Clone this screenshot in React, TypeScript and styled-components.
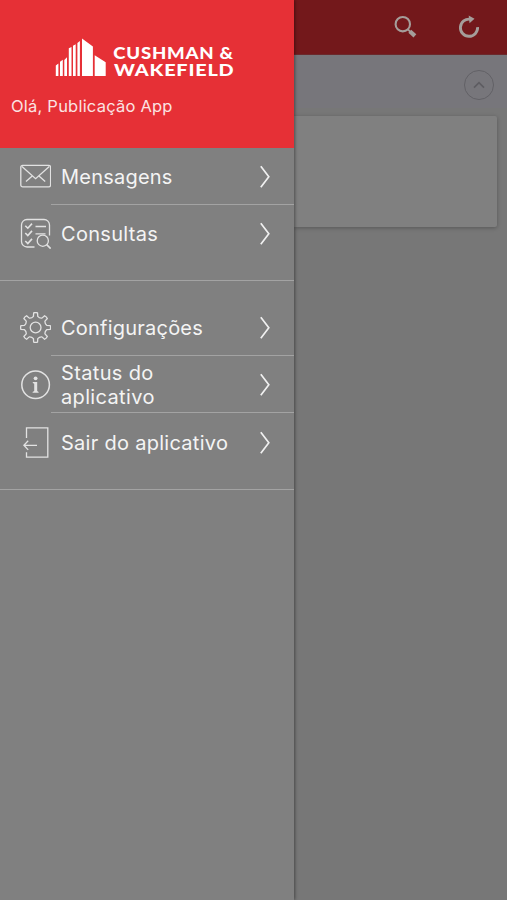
import React from "react";
import styled, { createGlobalStyle } from "styled-components";

const GlobalStyle = createGlobalStyle`
  * { box-sizing: border-box; }
  body { margin: 0; background: #777; font-family: Inter, "Liberation Sans", sans-serif; }
`;

const Screen = styled.div`
  display: flex;
  width: 507px;
  height: 900px;
  overflow: hidden;
  background: #777777;
`;

const Drawer = styled.aside`
  position: relative;
  z-index: 1;
  flex: 0 0 294px;
  background: #808080;
  box-shadow: 1px 0 3px rgba(0, 0, 0, 0.4);
`;

const Header = styled.header`
  height: 147.5px;
  padding: 37px 0 0 11px;
  background: #e63036;
`;

const Logo = styled.svg`
  display: block;
  width: 184px;
  height: 42px;
  margin-left: 42px;
`;

const Greeting = styled.div`
  margin-top: 17px;
  font-size: 16.5px;
  line-height: 20px;
  letter-spacing: 0.22px;
  color: #fbe3e3;
  white-space: nowrap;
`;

const Group = styled.ul<{ $top: number; $bottom: number }>`
  list-style: none;
  margin: 0;
  padding: ${(p) => p.$top}px 0 ${(p) => p.$bottom}px;
  border-bottom: 1px solid #a3a3a3;
`;

const Row = styled.li<{ $height: number }>`
  display: flex;
  height: ${(p) => p.$height}px;
  padding-left: 20px;
`;

const IconSlot = styled.span`
  display: flex;
  align-items: center;
  width: 31px;
  padding-top: 1px;
  color: #e2e2e2;
`;

const RowBody = styled.div<{ $divider?: boolean }>`
  display: flex;
  align-items: center;
  flex: 1;
  padding: 2px 23px 0 10px;
  border-bottom: 1px solid ${(p) => (p.$divider ? "#a3a3a3" : "transparent")};
`;

const Label = styled.span<{ $spacing: number }>`
  flex: 1;
  font-size: 20px;
  line-height: 24px;
  letter-spacing: ${(p) => p.$spacing}px;
  color: #f4f4f4;
  white-space: pre-line;
`;

const Page = styled.main`
  flex: 1;
  background: #777777;
`;

const TopBar = styled.div`
  display: flex;
  align-items: center;
  justify-content: flex-end;
  gap: 41px;
  height: 55px;
  padding-right: 27px;
  background: #73181b;
  border-bottom: 1px solid #6b292c;
  color: #a59d9a;
`;

const Section = styled.div`
  display: flex;
  justify-content: flex-end;
  height: 53px;
  padding: 15px 13px 0 0;
  background: #77767b;
`;

const Collapse = styled.span`
  display: flex;
  align-items: center;
  justify-content: center;
  width: 30px;
  height: 30px;
  border: 1.5px solid #626166;
  border-radius: 50%;
  color: #5e5d62;
`;

const Card = styled.div`
  height: 110.5px;
  margin: 8px 10px 0 0;
  background: #808080;
  border-radius: 0 2px 2px 0;
  box-shadow: 0 1px 4px rgba(0, 0, 0, 0.27);
`;

const Glyph = ({ children, size = 31 }: { children: React.ReactNode; size?: number }) => (
  <svg width={size} height={size} viewBox={`0 0 ${size} ${size}`} fill="none" stroke="currentColor" strokeWidth="1.3">
    {children}
  </svg>
);

const MailIcon = () => (
  <Glyph>
    <rect x=".8" y="4.3" width="29.8" height="21.6" rx="2" />
    <path d="M2 5.5l13.6 12.2L29.3 5.5M6 20.5l6.2-5.6M25.2 20.5L19 14.9" />
  </Glyph>
);

const ListSearchIcon = () => (
  <Glyph>
    <path d="M14.5 29H7a5.5 5.5 0 0 1-5.5-5.5V7A5.5 5.5 0 0 1 7 1.5h17A5.5 5.5 0 0 1 29.5 7v10.5" />
    <path d="M5.3 7.7l2.5 2.5 4.2-4.6M5.3 15l2.5 2.5 4.2-4.6M5.3 23l2.5 2.5 4.2-4.6" strokeWidth="1.6" />
    <path d="M15.5 8.5h10.5M15.5 15.8h10" />
    <circle cx="22.8" cy="22.7" r="5.6" />
    <path d="M26.7 26.7l4 3.9" strokeWidth="1.7" />
  </Glyph>
);

const TEETH = 8;
const polar = (r: number, deg: number) => {
  const a = (deg * Math.PI) / 180;
  return `${(15.6 + r * Math.sin(a)).toFixed(2)} ${(15.5 - r * Math.cos(a)).toFixed(2)}`;
};
const gearPath =
  Array.from({ length: TEETH }, (_, i) => {
    const c = i * 45;
    return `${i ? "L" : "M"}${polar(11.3, c - 11)}L${polar(14.8, c - 7.5)}Q${polar(15.3, c)} ${polar(14.8, c + 7.5)}L${polar(11.3, c + 11)}Q${polar(9.9, c + 22.5)} ${polar(11.3, c + 34)}`;
  }).join("") + "Z";

const GearIcon = () => (
  <Glyph>
    <path d={gearPath} strokeLinejoin="round" />
    <circle cx="15.6" cy="15.5" r="5.4" />
  </Glyph>
);

const InfoIcon = () => (
  <Glyph>
    <circle cx="15.6" cy="15.7" r="13.8" strokeWidth="1.5" />
    <circle cx="15.6" cy="9.3" r="1.9" fill="currentColor" stroke="none" />
    <path d="M12.8 13.1h4.4v9l1.4.8v.8h-6v-.8l1.6-.8V14.7l-1.4-.7z" fill="currentColor" stroke="none" />
  </Glyph>
);

const ExitIcon = () => (
  <Glyph>
    <path d="M6.5 11V.8h21.3v29.4H6.5v-5" />
    <path d="M17 18.3H4.3M8.2 13.7L3.9 18.3l4.3 4.6" />
  </Glyph>
);

const Chevron = () => (
  <svg width="12" height="24" viewBox="0 0 12 24" fill="none" stroke="#f0f0f0" strokeWidth="1.7">
    <path d="M1.8 1.2L9.8 11.7l-8 10.5" />
  </svg>
);

const SearchIcon = () => (
  <svg width="24" height="24" viewBox="0 0 24 24" fill="none" stroke="currentColor">
    <circle cx="9.8" cy="9.2" r="7.2" strokeWidth="2.1" />
    <path d="M14.9 14.3l2.5 2.5" strokeWidth="1.8" />
    <path d="M16.8 16.2l5.1 4.7" strokeWidth="4.2" />
  </svg>
);

const RefreshIcon = () => (
  <svg width="22" height="24" viewBox="0 0 22 24" fill="none" stroke="currentColor">
    <path d="M19.6 12.2A8.6 8.6 0 1 1 12.3 4.2" strokeWidth="2.9" />
    <path d="M10.7.5l5.8 3.2-5 4.6z" fill="currentColor" stroke="none" />
  </svg>
);

const rowsTop = [
  { label: "Mensagens", spacing: 0.22, height: 57, icon: <MailIcon />, divider: true },
  { label: "Consultas", spacing: 0.3, height: 57, icon: <ListSearchIcon />, divider: false },
];

const rowsBottom = [
  { label: "Configurações", spacing: 0.22, height: 57, icon: <GearIcon />, divider: true },
  { label: "Status do\naplicativo", spacing: 0.35, height: 57, icon: <InfoIcon />, divider: true },
  { label: "Sair do aplicativo", spacing: 0.28, height: 59, icon: <ExitIcon />, divider: false },
];

const MenuRows = ({ rows }: { rows: typeof rowsTop }) => (
  <>
    {rows.map((row) => (
      <Row key={row.label} $height={row.height}>
        <IconSlot>{row.icon}</IconSlot>
        <RowBody $divider={row.divider}>
          <Label $spacing={row.spacing}>{row.label}</Label>
          <Chevron />
        </RowBody>
      </Row>
    ))}
  </>
);

export default function App() {
  return (
    <>
      <GlobalStyle />
      <Screen>
        <Drawer>
          <Header>
            <Logo viewBox="53 37 184 42" fill="#fff">
              <path d="M55.8 65.5l2.6-2V76h-2.6zM60 61.8l2.8-2V76H60zM64.3 60l2.7-2.7V76h-2.7zM68.8 48.3l2.7-1.3v29h-2.7zM73 45.8l2.7-1.5V76H73zM77.4 43l2.5-2v35h-2.5zM82 38.5l10.9 8V76H82zM94.7 55.3l11 7V76h-11z" />
              <text fontFamily="Lato" fontSize="17.2" fontWeight="900" letterSpacing="0.7">
                <tspan x="113.3" y="59.3" textLength="120.5" lengthAdjust="spacingAndGlyphs">CUSHMAN &amp;</tspan>
                <tspan x="114" y="76" textLength="120.5" lengthAdjust="spacingAndGlyphs">WAKEFIELD</tspan>
              </text>
            </Logo>
            <Greeting>Olá, Publicação App</Greeting>
          </Header>
          <nav>
            <Group $top={0} $bottom={18.5}>
              <MenuRows rows={rowsTop} />
            </Group>
            <Group $top={17.5} $bottom={17}>
              <MenuRows rows={rowsBottom} />
            </Group>
          </nav>
        </Drawer>
        <Page>
          <TopBar>
            <SearchIcon />
            <RefreshIcon />
          </TopBar>
          <Section>
            <Collapse>
              <svg width="12" height="8" viewBox="0 0 12 8" fill="none" stroke="currentColor" strokeWidth="1.7">
                <path d="M1 6.6L6 1.6l5 5" />
              </svg>
            </Collapse>
          </Section>
          <Card />
        </Page>
      </Screen>
    </>
  );
}
